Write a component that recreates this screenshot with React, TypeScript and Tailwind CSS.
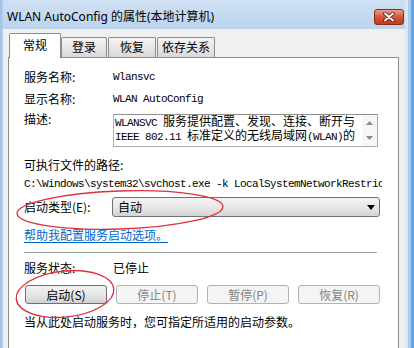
import React from "react";

const cjk = "font-['Microsoft_YaHei','Noto_Sans_CJK_SC',sans-serif]";
const mono = "font-['Liberation_Mono','Noto_Sans_CJK_SC',monospace] text-[11px] tracking-[-0.6px]";

function Mono({ children }: { children: React.ReactNode }) {
  return <span className={mono}>{children}</span>;
}

function Tab({ label, selected, w }: { label: string; selected?: boolean; w: string }) {
  if (selected) {
    return (
      <div
        className={`relative z-10 -mb-px h-[25px] ${w} bg-white border border-b-0 border-[#898c95] rounded-t-[2px] flex justify-center pt-[3px] leading-[16px] text-[12px] text-black`}
      >
        {label}
      </div>
    );
  }
  return (
    <div
      className={`h-[20px] ${w} bg-gradient-to-b from-[#f4f4f4] to-[#d9d9d9] border border-b-0 border-[#898c95] rounded-t-[2px] flex justify-center pt-[1px] leading-[16px] text-[12px] text-black`}
    >
      {label}
    </div>
  );
}

function Btn({ label, disabled, w }: { label: string; disabled?: boolean; w: string }) {
  return (
    <div
      className={
        disabled
          ? `h-[19px] ${w} rounded-[3px] border border-[#adb2b5] bg-[#f4f4f4] text-[#838383] flex items-center justify-center text-[12px] leading-[16px]`
          : `h-[19px] ${w} rounded-[3px] border border-[#707070] bg-gradient-to-b from-[#f2f2f2] via-[#e6e6e6] to-[#d2d2d2] text-black flex items-center justify-center text-[12px] leading-[16px]`
      }
    >
      {label}
    </div>
  );
}

export default function App() {
  return (
    <div className={`relative w-[414px] h-[348px] overflow-hidden flex bg-[#c3d8ef] ${cjk}`}>
      {/* left frame */}
      <div className="w-[3px] h-full bg-gradient-to-r from-[#9fbfe4] to-[#b8d0eb]" />
      {/* main column */}
      <div className="flex-1 flex flex-col">
        {/* title bar */}
        <div className="h-[29px] flex items-start justify-between pl-[4px] pr-[1px] bg-gradient-to-b from-[#cfe0f3] to-[#bcd3ed]">
          <div className="mt-[9px] leading-[16px] text-[12px] text-black font-['Noto_Sans','Noto_Sans_CJK_SC',sans-serif]">
            WLAN AutoConfig 的属性(本地计算机)
          </div>
          <div className="mt-[9px] w-[30px] h-[16px] rounded-[3px] border border-[#8a2b1c] bg-gradient-to-b from-[#e8a08f] via-[#d55338] to-[#c23a20] flex items-center justify-center">
            <svg width="12" height="10" viewBox="0 0 12 10">
              <path d="M2 1.5 L10 8.5 M10 1.5 L2 8.5" stroke="#5a150b" strokeWidth="3.6" strokeLinecap="round" />
              <path d="M2 1.5 L10 8.5 M10 1.5 L2 8.5" stroke="#ffffff" strokeWidth="2" strokeLinecap="round" />
            </svg>
          </div>
        </div>
        {/* client area */}
        <div className="flex-1 flex flex-col bg-[#f0f0f0] pl-[5px] pr-[6px] pt-[4px]">
          {/* tabs */}
          <div className="h-[24px] flex items-end pl-[1px]">
            <Tab label="常规" selected w="w-[52px]" />
            <Tab label="登录" w="w-[46px]" />
            <Tab label="恢复" w="w-[48px] ml-px" />
            <Tab label="依存关系" w="w-[58px] ml-px" />
          </div>
          {/* panel */}
          <div className="flex-1 bg-white border border-b-0 border-[#898c95] flex flex-col pl-[15px] pt-[11px] text-[12px] text-black">
            <div className="h-[16px] flex items-center leading-[16px]">
              <div className="w-[89px]">服务名称:</div>
              <Mono>Wlansvc</Mono>
            </div>
            <div className="mt-[6px] h-[16px] flex items-center leading-[16px]">
              <div className="w-[89px]">显示名称:</div>
              <Mono>WLAN AutoConfig</Mono>
            </div>
            <div className="mt-[7px] flex items-start">
              <div className="w-[89px] -mt-[3px] leading-[16px]">描述:</div>
              <div className="w-[265px] h-[33px] border border-[#abadb3] border-t-[#8e8f8f] border-l-[#b0b0b0] flex">
                <div className="flex-1 pl-[1px] leading-[12px] text-[12px] whitespace-nowrap overflow-hidden">
                  <div>
                    <Mono>WLANSVC </Mono>服务提供配置、发现、连接、断开与
                  </div>
                  <div>
                    <Mono>IEEE 802.11 </Mono>标准定义的无线局域网<Mono>(WLAN)</Mono>的
                  </div>
                </div>
                <div className="w-[15px] h-full bg-[#f6f6f6] flex flex-col items-center justify-between py-[6px]">
                  <svg width="7" height="4" viewBox="0 0 7 4">
                    <path d="M3.5 0 L7 4 L0 4 Z" fill="#8a8a8a" />
                  </svg>
                  <svg width="7" height="4" viewBox="0 0 7 4">
                    <path d="M0 0 L7 0 L3.5 4 Z" fill="#8a8a8a" />
                  </svg>
                </div>
              </div>
            </div>
            <div className="mt-[10px] h-[16px] leading-[16px]">可执行文件的路径:</div>
            <div className="mt-[1px] h-[16px] w-[358px] overflow-hidden whitespace-nowrap leading-[16px]">
              <Mono>C:\Windows\system32\svchost.exe -k LocalSystemNetworkRestricted</Mono>
            </div>
            <div className="mt-[7px] h-[20px] flex items-center">
              <div className="w-[88px] leading-[16px]">启动类型(E):</div>
              <div className="w-[268px] h-[20px] rounded-[3px] border border-[#707070] bg-gradient-to-b from-[#f3f3f3] via-[#e8e8e8] to-[#d4d4d4] flex items-center justify-between pl-[5px] pr-[4px] leading-[16px]">
                <span>自动</span>
                <svg width="8" height="5" viewBox="0 0 8 5">
                  <path d="M0 0 L8 0 L4 5 Z" fill="#000" />
                </svg>
              </div>
            </div>
            <div className="mt-[10px] h-[16px] leading-[16px]">
              <span className="text-[#0066cc] underline underline-offset-2">帮助我配置服务启动选项。</span>
            </div>
            <div className="mt-[9px] w-[353px] h-px bg-[#a0a0a0]" />
            <div className="mt-[7px] h-[16px] flex items-center leading-[16px]">
              <div className="w-[89px]">服务状态:</div>
              <span>已停止</span>
            </div>
            <div className="mt-[9px] ml-px flex gap-[9px]">
              <Btn label="启动(S)" w="w-[82px]" />
              <Btn label="停止(T)" disabled w="w-[82px]" />
              <Btn label="暂停(P)" disabled w="w-[82px]" />
              <Btn label="恢复(R)" disabled w="w-[82px]" />
            </div>
            <div className="mt-[10px] h-[16px] leading-[16px] whitespace-nowrap">
              当从此处启动服务时，您可指定所适用的启动参数。
            </div>
          </div>
        </div>
      </div>
      {/* right frame */}
      <div className="w-[9px] h-full flex">
        <div className="w-[3px] h-full bg-[#dce6f1]" />
        <div className="w-[3px] h-full bg-[#a9c9ee]" />
        <div className="w-[3px] h-full bg-[#5fa3ea]" />
      </div>
      {/* red annotation ellipses */}
      <svg className="absolute inset-0 pointer-events-none" width="414" height="348" viewBox="0 0 414 348">
        <ellipse cx="120" cy="210" rx="103" ry="19" transform="rotate(-2 120 210)" fill="none" stroke="#e0303c" strokeWidth="1.3" />
        <ellipse cx="65" cy="294" rx="49" ry="23" transform="rotate(-6 65 294)" fill="none" stroke="#e0303c" strokeWidth="1.3" />
      </svg>
    </div>
  );
}
